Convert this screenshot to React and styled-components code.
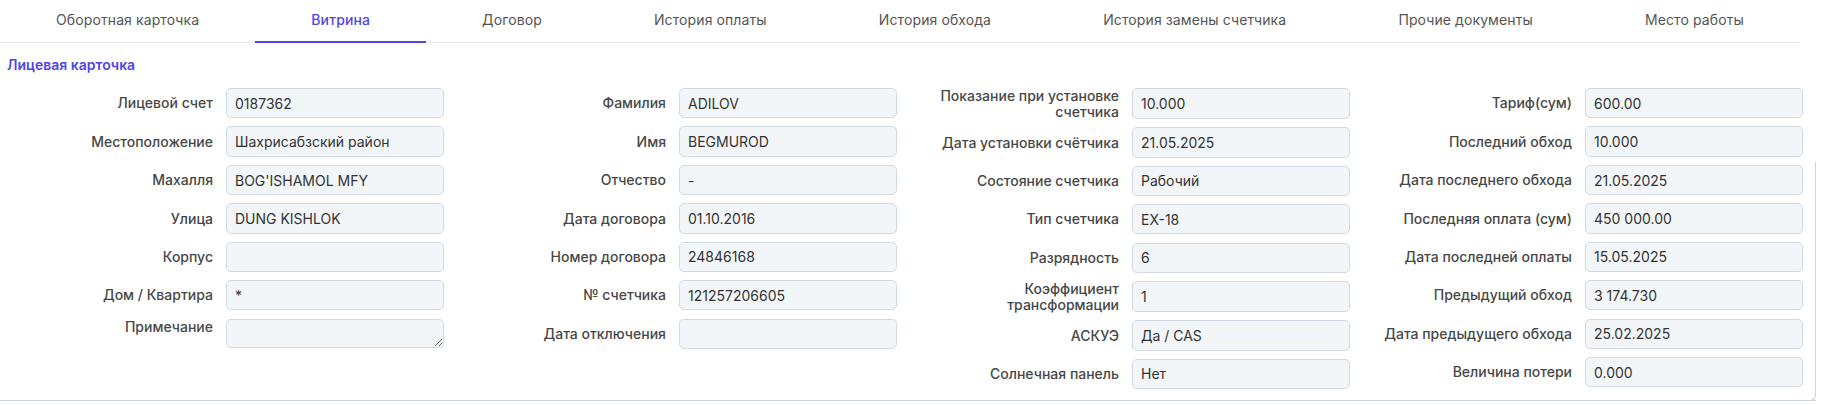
import React, { useState } from "react";
import styled, { createGlobalStyle } from "styled-components";

const GlobalStyle = createGlobalStyle`
  body {
    margin: 0;
    background: #fff;
    font-family: Inter, "Noto Sans", sans-serif;
    color: #333;
  }
  * {
    box-sizing: border-box;
  }
`;

const Page = styled.div`
  width: 1835px;
`;

const TabBar = styled.div`
  display: flex;
  width: 1800px;
  border-bottom: 1px solid #e5e7eb;
`;

const Tab = styled.div`
  flex: 1 1 auto;
  height: 43px;
  margin-bottom: -1px;
  padding-bottom: 3px;
  display: flex;
  align-items: center;
  justify-content: center;
  font-size: 14px;
  letter-spacing: 0.1px;
  color: ${(p) => (p.active ? "#4f46e5" : "#555")};
  font-weight: ${(p) => (p.active ? 500 : 400)};
  border-bottom: 2px solid ${(p) => (p.active ? "#4f46e5" : "transparent")};
  white-space: nowrap;
  cursor: pointer;
`;

const SectionTitle = styled.div`
  padding: 13px 7px 0;
  font-size: 14px;
  font-weight: 600;
  line-height: 17px;
  color: #4f46e5;
`;

const Card = styled.div`
  position: relative;
  width: 1816px;
  padding: 15px 4px 11px 0;
  border-bottom: 1px solid #cbd5e1;
  &::after {
    content: "";
    position: absolute;
    right: 0;
    bottom: -1px;
    width: 12px;
    height: 238px;
    border-right: 1px solid #cbd5e1;
    border-bottom: 1px solid #cbd5e1;
    border-bottom-right-radius: 6px;
  }
`;

const Grid = styled.div`
  display: grid;
  grid-template-columns: repeat(4, 453px);
  align-items: start;
`;

const Column = styled.div`
  display: flex;
  flex-direction: column;
  gap: 8.1px;
  padding-right: 9px;
`;

const Field = styled.div`
  display: flex;
  align-items: ${(p) => (p.top ? "flex-start" : "center")};
`;

const Label = styled.div`
  width: 213px;
  flex: 0 0 213px;
  padding-left: 8px;
  margin-right: 13px;
  text-align: right;
  font-size: 14px;
  font-weight: 500;
  line-height: 15.6px;
  color: #474747;
`;

const Input = styled.input`
  width: 218px;
  height: 30.33px;
  padding: 0 8px;
  font-family: Inter, "Noto Sans", sans-serif;
  font-size: 14px;
  color: #333;
  background: #f3f6f9;
  border: 1px solid #d0d9e4;
  border-radius: 5px;
  outline: none;
`;

const Area = styled.textarea`
  width: 218px;
  height: 29px;
  padding: 6px 8px;
  font-family: Inter, "Noto Sans", sans-serif;
  font-size: 14px;
  color: #333;
  background: #f3f6f9;
  border: 1px solid #d0d9e4;
  border-radius: 5px;
  outline: none;
  display: block;
`;

const tabs = [
  "Оборотная карточка",
  "Витрина",
  "Договор",
  "История оплаты",
  "История обхода",
  "История замены счетчика",
  "Прочие документы",
  "Место работы",
];

const columns = [
  [
    ["Лицевой счет", "0187362"],
    ["Местоположение", "Шахрисабзский район"],
    ["Махалля", "BOG'ISHAMOL MFY"],
    ["Улица", "DUNG KISHLOK"],
    ["Корпус", ""],
    ["Дом / Квартира", "*"],
    ["Примечание", null],
  ],
  [
    ["Фамилия", "ADILOV"],
    ["Имя", "BEGMUROD"],
    ["Отчество", "-"],
    ["Дата договора", "01.10.2016"],
    ["Номер договора", "24846168"],
    ["№ счетчика", "121257206605"],
    ["Дата отключения", ""],
  ],
  [
    ["Показание при установке счетчика", "10.000"],
    ["Дата установки счётчика", "21.05.2025"],
    ["Состояние счетчика", "Рабочий"],
    ["Тип счетчика", "EX-18"],
    ["Разрядность", "6"],
    ["Коэффициент трансформации", "1"],
    ["АСКУЭ", "Да / CAS"],
    ["Солнечная панель", "Нет"],
  ],
  [
    ["Тариф(сум)", "600.00"],
    ["Последний обход", "10.000"],
    ["Дата последнего обхода", "21.05.2025"],
    ["Последняя оплата (сум)", "450 000.00"],
    ["Дата последней оплаты", "15.05.2025"],
    ["Предыдущий обход", "3 174.730"],
    ["Дата предыдущего обхода", "25.02.2025"],
    ["Величина потери", "0.000"],
  ],
];

const App = () => {
  const [active, setActive] = useState(1);

  return (
    <Page>
      <GlobalStyle />
      <TabBar>
        {tabs.map((t, i) => (
          <Tab key={t} active={i === active} onClick={() => setActive(i)}>
            {t}
          </Tab>
        ))}
      </TabBar>
      <SectionTitle>Лицевая карточка</SectionTitle>
      <Card>
        <Grid>
          {columns.map((col, ci) => (
            <Column key={ci}>
              {col.map(([label, value]) =>
                value === null ? (
                  <Field key={label} top>
                    <Label>{label}</Label>
                    <Area readOnly />
                  </Field>
                ) : (
                  <Field key={label}>
                    <Label>{label}</Label>
                    <Input readOnly value={value} />
                  </Field>
                )
              )}
            </Column>
          ))}
        </Grid>
      </Card>
    </Page>
  );
};

export default App;
